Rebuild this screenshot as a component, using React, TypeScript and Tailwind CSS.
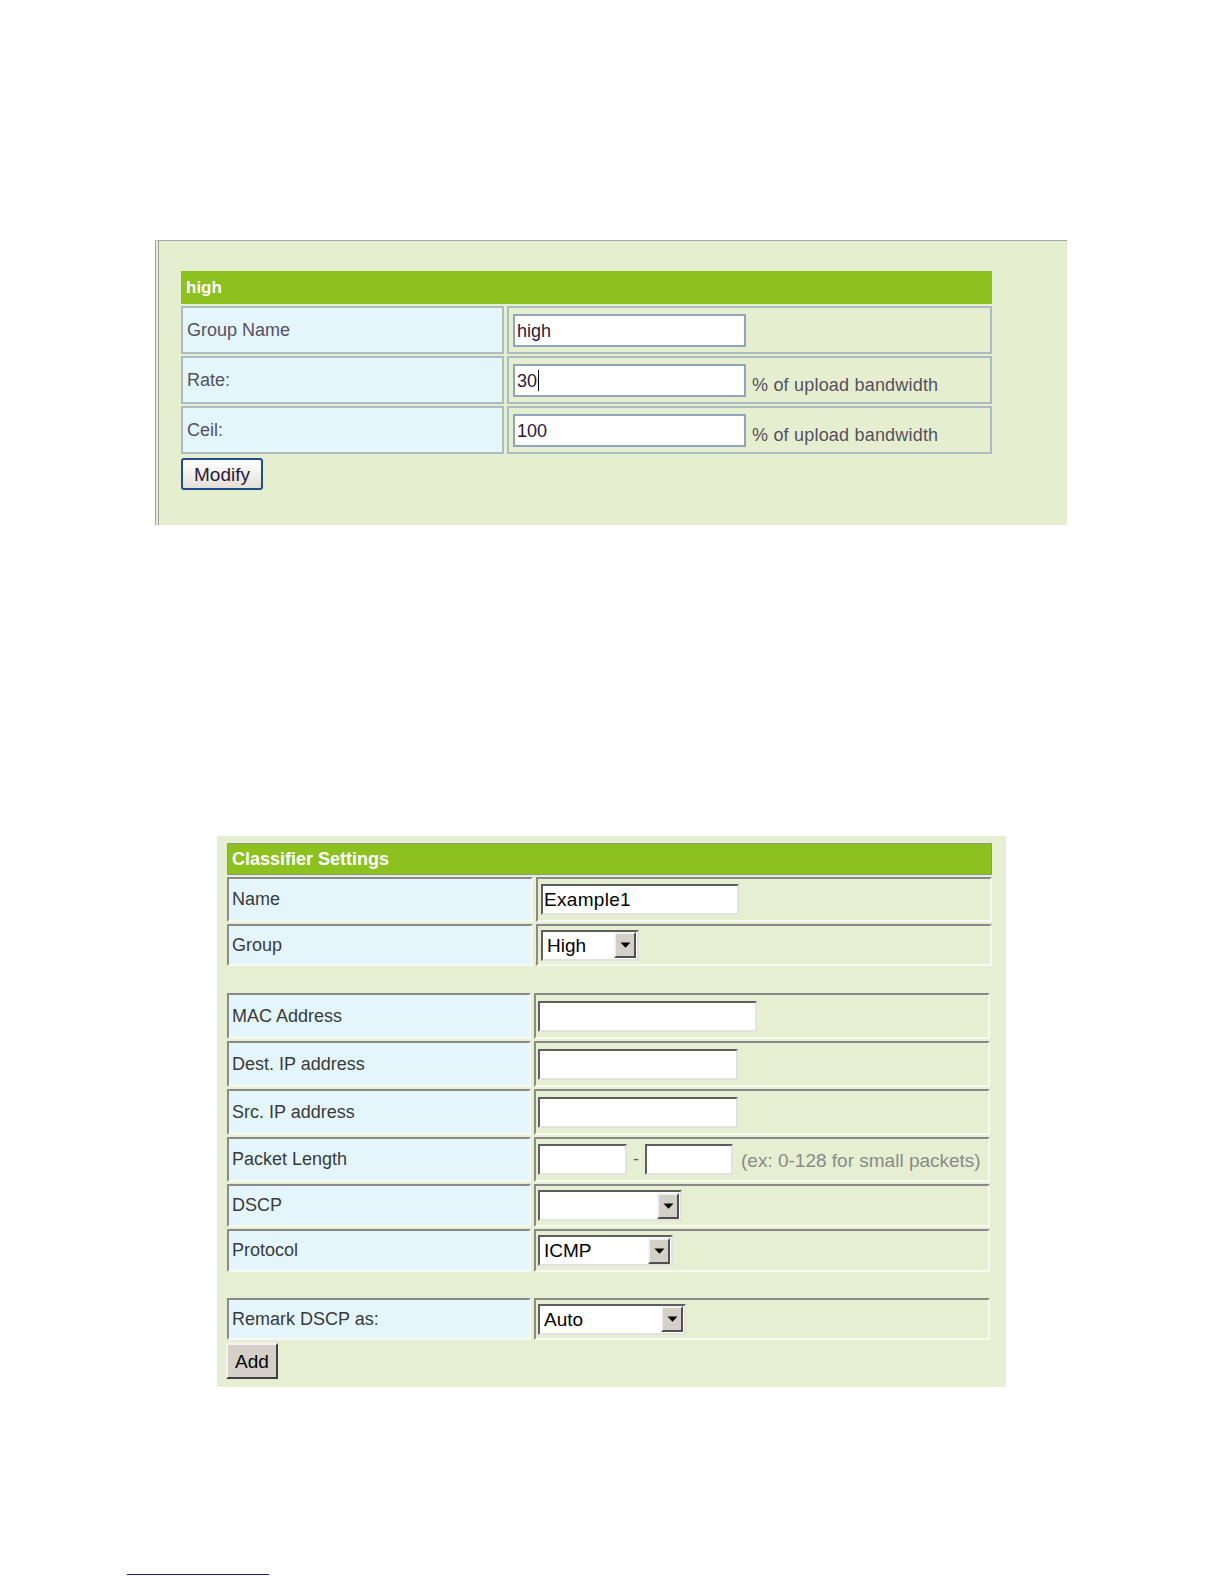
import React from "react";

const font = { fontFamily: '"Liberation Sans", Arial, sans-serif' };

function XpInput({ w, children }: { w: string; children?: React.ReactNode }) {
  return (
    <div
      className={`${w} h-[33px] bg-white border-2 border-[#8fa6ba] flex items-center pl-[2px] text-[18px] text-[#2e1838] leading-none`}
    >
      {children}
    </div>
  );
}

function P1Row({ label, value, suffix, caret }: { label: string; value: string; suffix?: boolean; caret?: boolean }) {
  return (
    <div className="flex gap-[3px] mt-[2px] h-[48px]">
      <div className="w-[323px] h-full bg-[#e3f6fc] border-2 border-[#adbcc3] flex items-center pl-[4px] text-[18px] text-[#56505e]">
        {label}
      </div>
      <div className="w-[485px] h-full border-2 border-[#adbcc3] flex items-start pl-[4px] pt-[6px]">
        <XpInput w="w-[233px]">
          <span>{value}</span>
          {caret && <span className="inline-block w-px h-[21px] bg-black ml-px" />}
        </XpInput>
        {suffix && <span className="ml-[6px] mt-[8px] text-[18px] text-[#56505e] whitespace-nowrap tracking-[0.2px]">% of upload bandwidth</span>}
      </div>
    </div>
  );
}

function InsetBox({ w, children, extra = "" }: { w: string; children?: React.ReactNode; extra?: string }) {
  return (
    <div
      className={`${w} h-[31px] bg-white border-2 border-t-[#5e5e5e] border-l-[#5e5e5e] border-b-[#e2e2de] border-r-[#e2e2de] flex items-center text-[19px] text-black leading-none ${extra}`}
    >
      {children}
    </div>
  );
}

function Select({ w, value }: { w: string; value: string }) {
  return (
    <InsetBox w={w} extra="justify-between">
      <span className="pl-[4px]">{value}</span>
      <div className="w-[22px] h-[26px] bg-[#d4d0c8] border-2 border-t-[#f2f2f2] border-l-[#f2f2f2] border-b-[#505050] border-r-[#505050] flex items-center justify-center mr-px">
        <svg width="11" height="6" viewBox="0 0 11 6">
          <path d="M0.5 0.5 L10.5 0.5 L5.5 5.8 Z" fill="#000" />
        </svg>
      </div>
    </InsetBox>
  );
}

function P2Row({
  label,
  h,
  labelW,
  valueW,
  children,
}: {
  label: string;
  h: string;
  labelW: string;
  valueW: string;
  children?: React.ReactNode;
}) {
  return (
    <div className={`flex gap-[3px] mt-[2px] ${h}`}>
      <div
        className={`${labelW} h-full bg-[#e4f6fc] border-2 border-t-[#8a8a8a] border-l-[#8a8a8a] border-b-[#f6f9f0] border-r-[#f6f9f0] flex items-center pl-[3px] text-[18px] text-[#3a3a3a]`}
      >
        {label}
      </div>
      <div
        className={`${valueW} h-full border-2 border-t-[#8a8a8a] border-l-[#8a8a8a] border-b-[#f6f9f0] border-r-[#f6f9f0] flex items-center pl-[2px]`}
      >
        {children}
      </div>
    </div>
  );
}

export default function App() {
  return (
    <div className="w-[1224px] h-[1584px] bg-white flex flex-col overflow-hidden" style={font}>
      {/* Panel 1 */}
      <div className="ml-[155px] mt-[240px] w-[912px] h-[285px] bg-[#e5efd0] border-t border-t-[#a6a6a6] border-l-[4px] border-l-[#a0a0a0] border-double flex flex-col pl-[22px] pt-[30px]">
        <div className="w-[811px] h-[33px] bg-[#8dc11f] flex items-center pl-[5px] text-white font-bold text-[17px]">
          high
        </div>
        <P1Row label="Group Name" value="high" />
        <P1Row label="Rate:" value="30" suffix caret />
        <P1Row label="Ceil:" value="100" suffix />
        <button className="mt-[4px] w-[82px] h-[32px] rounded-[3px] border-2 border-[#1f4f86] bg-gradient-to-b from-white to-[#e2e0d6] text-[19px] text-[#2a1838] flex items-center justify-center leading-none">
          Modify
        </button>
      </div>

      {/* Panel 2 */}
      <div className="ml-[217px] mt-[311px] w-[789px] h-[551px] bg-[#e6efd2] flex flex-col pl-[10px] pt-[7px]">
        <div className="w-[765px] h-[32px] bg-[#8dc11f] border border-[#8d9886] flex items-center pl-[4px] text-white font-bold text-[18px]">
          Classifier Settings
        </div>
        <P2Row label="Name" h="h-[45px]" labelW="w-[306px]" valueW="w-[456px]">
          <div className="ml-[1px]">
            <InsetBox w="w-[198px]">
              <span className="pl-[1px] tracking-[0.3px]">Example1</span>
            </InsetBox>
          </div>
        </P2Row>
        <P2Row label="Group" h="h-[42px]" labelW="w-[306px]" valueW="w-[456px]">
          <div className="ml-[1px]">
            <Select w="w-[98px]" value="High" />
          </div>
        </P2Row>

        <div className="h-[25px]" />
        <P2Row label="MAC Address" h="h-[46px]" labelW="w-[304px]" valueW="w-[456px]">
          <InsetBox w="w-[219px]" />
        </P2Row>
        <P2Row label="Dest. IP address" h="h-[46px]" labelW="w-[304px]" valueW="w-[456px]">
          <InsetBox w="w-[200px]" />
        </P2Row>
        <P2Row label="Src. IP address" h="h-[46px]" labelW="w-[304px]" valueW="w-[456px]">
          <InsetBox w="w-[200px]" />
        </P2Row>
        <P2Row label="Packet Length" h="h-[45px]" labelW="w-[304px]" valueW="w-[456px]">
          <div className="flex items-center whitespace-nowrap">
            <InsetBox w="w-[89px]" />
            <span className="mx-[6px] text-[18px] text-[#666]">-</span>
            <InsetBox w="w-[88px]" />
            <span className="ml-[8px] mt-[3px] text-[19px] text-[#8a8a8a] whitespace-nowrap">(ex: 0-128 for small packets)</span>
          </div>
        </P2Row>
        <P2Row label="DSCP" h="h-[43px]" labelW="w-[304px]" valueW="w-[456px]">
          <Select w="w-[144px]" value="" />
        </P2Row>
        <P2Row label="Protocol" h="h-[43px]" labelW="w-[304px]" valueW="w-[456px]">
          <Select w="w-[135px]" value="ICMP" />
        </P2Row>

        <div className="h-[24px]" />
        <P2Row label="Remark DSCP as:" h="h-[42px]" labelW="w-[304px]" valueW="w-[456px]">
          <Select w="w-[148px]" value="Auto" />
        </P2Row>
        <button className="mt-[3px] -ml-px w-[52px] h-[36px] bg-[#d4d0c8] border-2 border-t-[#f4f4f4] border-l-[#f4f4f4] border-b-[#404040] border-r-[#404040] text-[19px] text-black flex items-center justify-center leading-none">
          Add
        </button>
      </div>

      {/* Footnote rule */}
      <div className="ml-[127px] mt-[187px] w-[142px] h-px bg-[#1c1c80]" />
    </div>
  );
}
